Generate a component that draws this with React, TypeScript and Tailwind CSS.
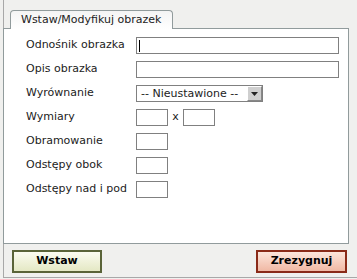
import React from "react";

const rows = [
  { label: "Odnośnik obrazka", kind: "wide", cursor: true },
  { label: "Opis obrazka", kind: "wide" },
  { label: "Wyrównanie", kind: "select" },
  { label: "Wymiary", kind: "dims" },
  { label: "Obramowanie", kind: "small" },
  { label: "Odstępy obok", kind: "small" },
  { label: "Odstępy nad i pod", kind: "small" },
];

function Box({ w }: { w: string }) {
  return <div className={`${w} h-[17px] border border-[#808080] bg-white`} />;
}

function Field({ kind, cursor }: { kind: string; cursor?: boolean }) {
  if (kind === "wide")
    return (
      <div className="w-[203px] h-[17px] border border-[#808080] bg-white flex items-center pl-[2px]">
        {cursor && <div className="w-px h-[12px] bg-black" />}
      </div>
    );
  if (kind === "select")
    return (
      <div className="w-[127px] h-[17px] border border-[#808080] bg-white flex items-center">
        <span className="flex-1 pl-[4px] text-[11px] leading-none text-[#222]">-- Nieustawione --</span>
        <div className="w-[15px] h-[15px] bg-[#cfcfcf] border border-t-white border-l-white border-r-[#888] border-b-[#888] flex items-center justify-center">
          <svg width="7" height="4" viewBox="0 0 7 4">
            <path d="M0 0h7L3.5 4z" fill="#222" />
          </svg>
        </div>
      </div>
    );
  if (kind === "dims")
    return (
      <div className="flex items-center">
        <Box w="w-[32px]" />
        <span className="w-[15px] text-center text-[11px] text-[#222]">x</span>
        <Box w="w-[32px]" />
      </div>
    );
  return <Box w="w-[32px]" />;
}

export default function App() {
  return (
    <div className="w-[357px] h-[279px] bg-[#f0f0ee] font-['DejaVu_Sans',Verdana,sans-serif] text-[11px] text-[#222]">
      <div className="ml-[3px] w-[354px] h-[278px] border-l border-b border-[#a8a8a8] flex flex-col">
        <div className="pt-[10px] pl-[6px] h-[28px] flex">
          <div className="w-[163px] h-[19px] bg-gradient-to-b from-[#f4f4f4] to-white border border-b-0 border-[#919b9c] rounded-t-[4px] pl-[10px] flex items-center relative z-10">
            Wstaw/Modyfikuj obrazek
          </div>
        </div>
        <div className="w-[346px] h-[216px] -ml-px border border-[#919b9c] bg-white pt-[8px] pl-[22px] flex flex-col gap-[7px]">
          {rows.map((r) => (
            <div key={r.label} className="flex items-center h-[17px]">
              <span className="w-[110px] whitespace-nowrap">{r.label}</span>
              <Field kind={r.kind} cursor={r.cursor} />
            </div>
          ))}
        </div>
        <div className="flex justify-between pl-[8px] pr-[10px] pt-[6px]">
          <button className="w-[90px] h-[23px] border-2 border-[#5a6338] bg-gradient-to-b from-[#fbfbf0] to-[#e4e8c4] font-bold text-[11px] text-black">
            Wstaw
          </button>
          <button className="w-[91px] h-[23px] border-2 border-[#8a2a18] bg-gradient-to-b from-[#fce6dc] to-[#f0b8a4] font-bold text-[11px] text-black">
            Zrezygnuj
          </button>
        </div>
      </div>
    </div>
  );
}
